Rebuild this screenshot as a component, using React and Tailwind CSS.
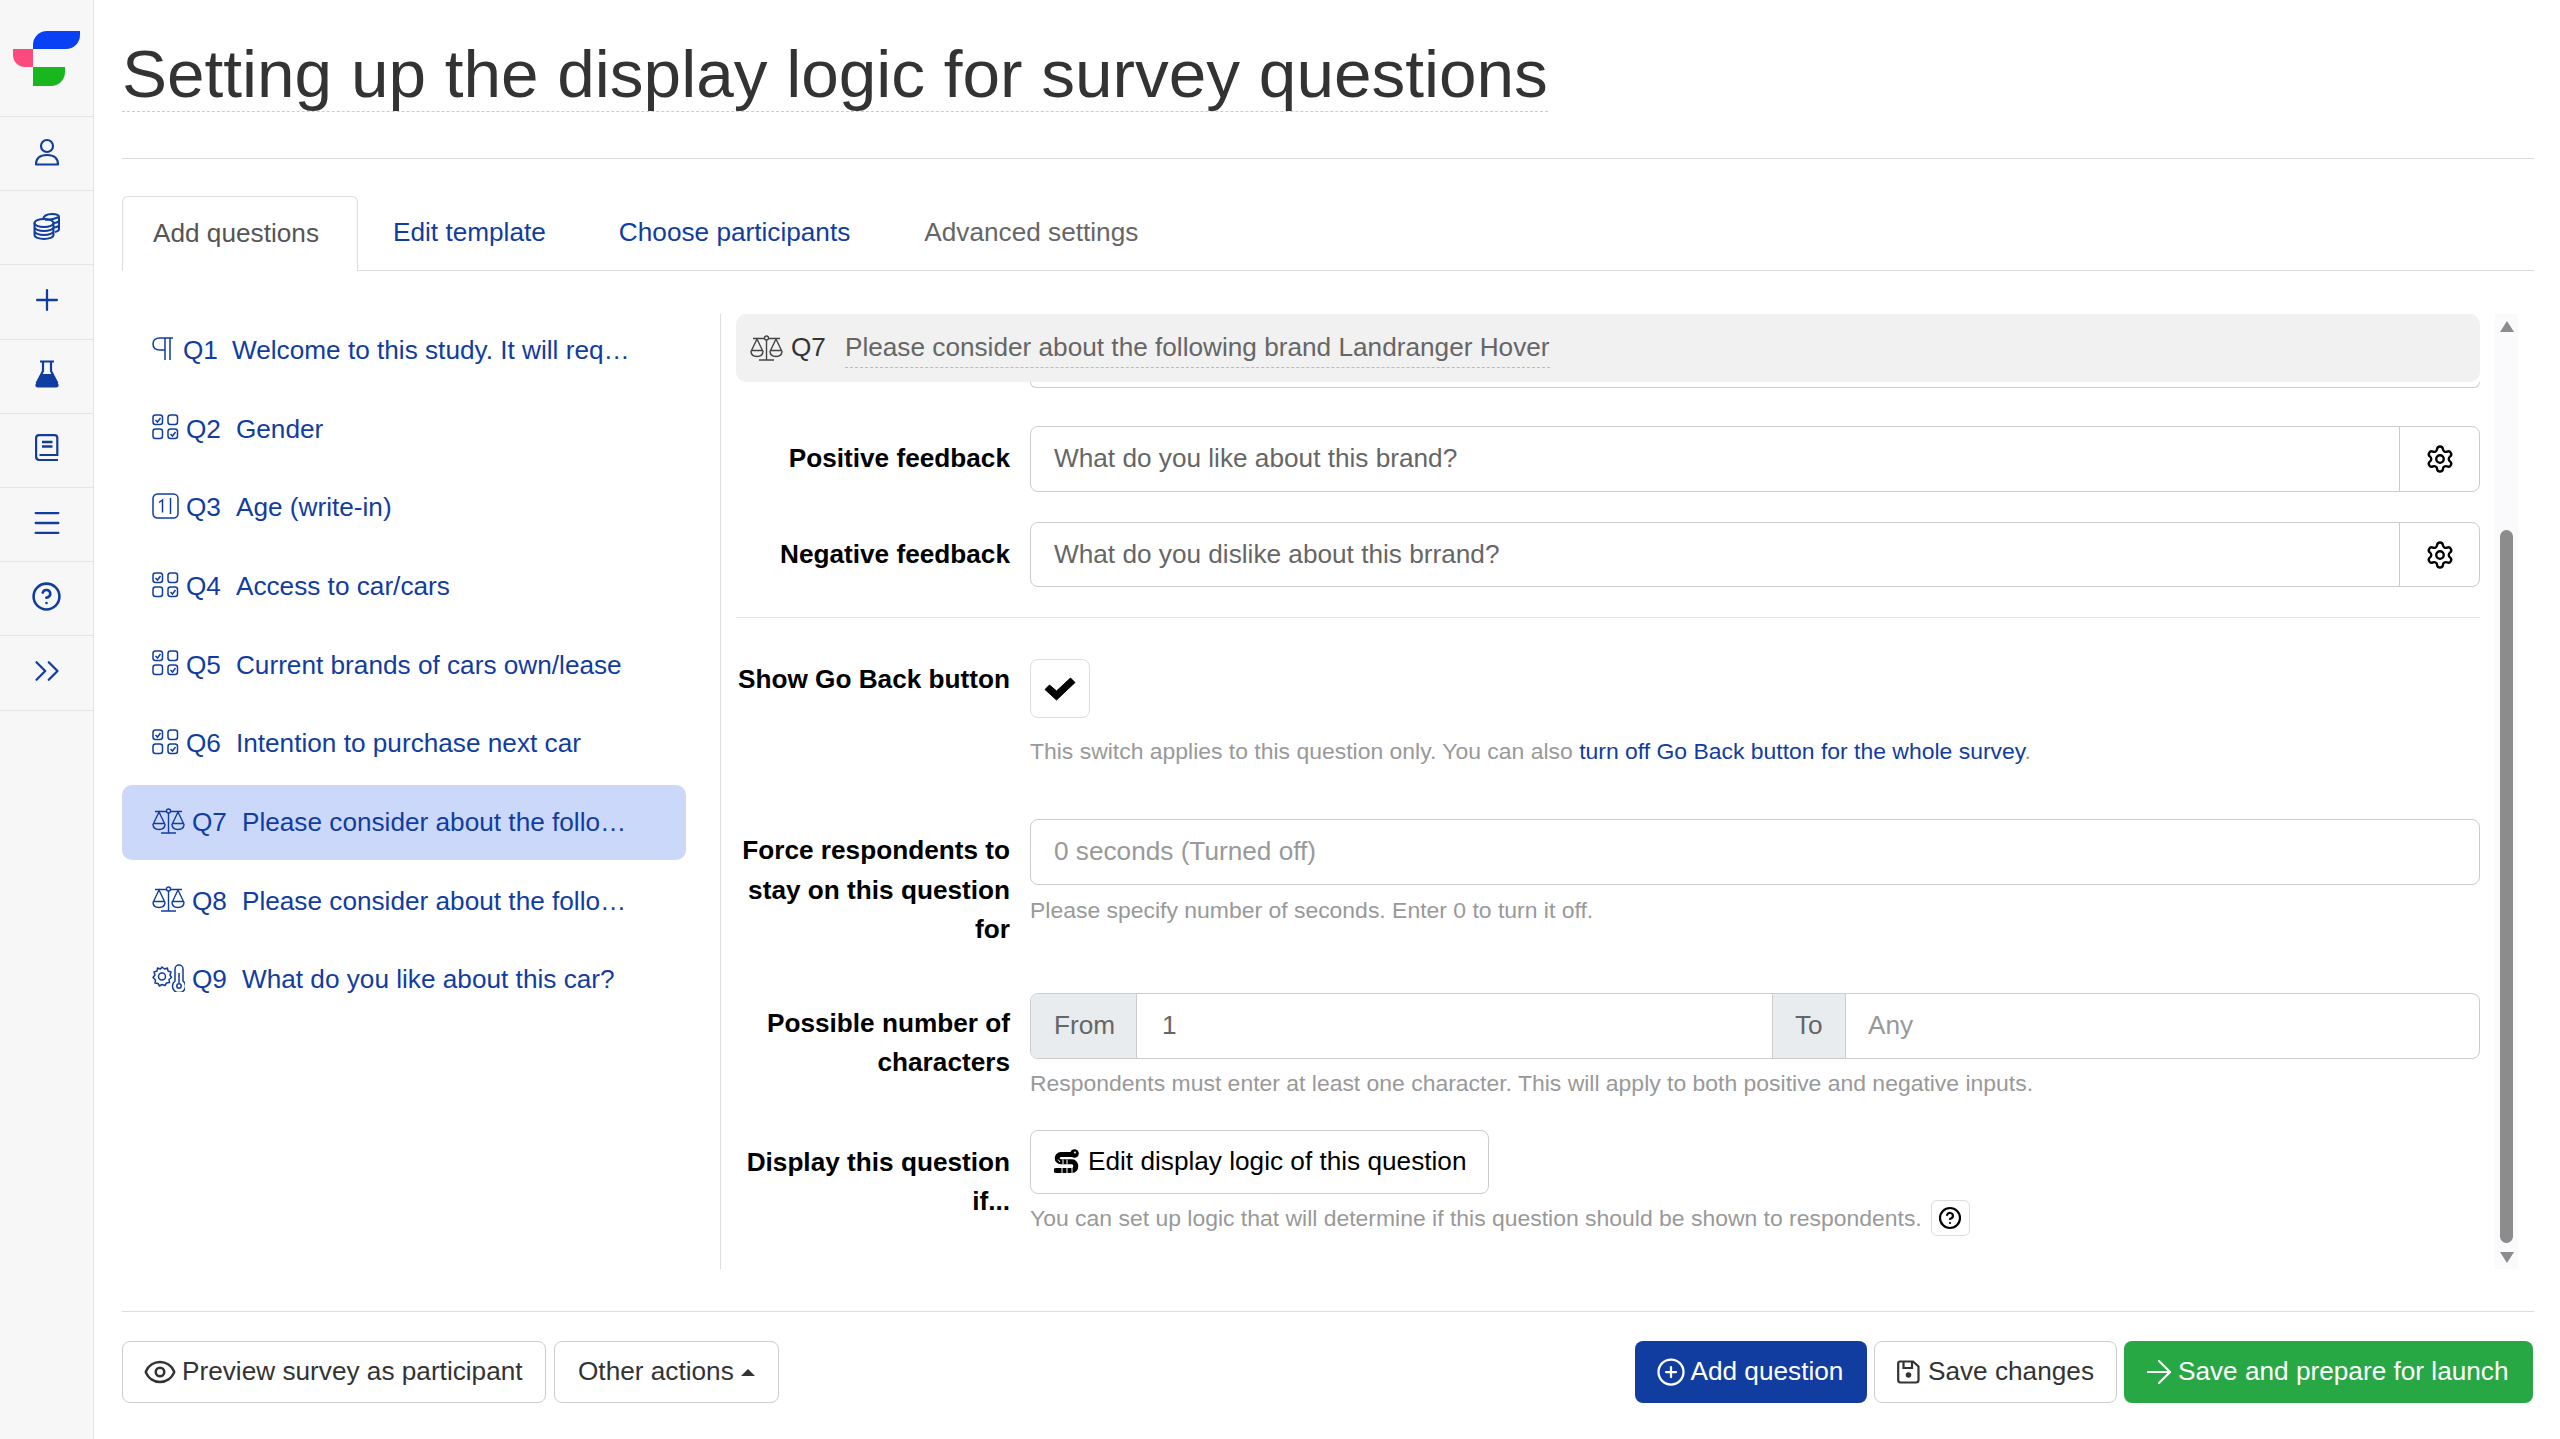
import { Settings, Eye, Plus, Menu, ChevronsRight, ArrowRight, CirclePlus, CircleHelp } from 'lucide-react';

const QUESTIONS = [
  { id: 'Q1', type: 'text', title: 'Welcome to this study. It will req…' },
  { id: 'Q2', type: 'choice', title: 'Gender' },
  { id: 'Q3', type: 'number', title: 'Age (write-in)' },
  { id: 'Q4', type: 'choice', title: 'Access to car/cars' },
  { id: 'Q5', type: 'choice', title: 'Current brands of cars own/lease' },
  { id: 'Q6', type: 'choice', title: 'Intention to purchase next car' },
  { id: 'Q7', type: 'scale', title: 'Please consider about the follo…', active: true },
  { id: 'Q8', type: 'scale', title: 'Please consider about the follo…' },
  { id: 'Q9', type: 'temp', title: 'What do you like about this car?' },
];

function UserIcon() {
  return (
    <svg width="26" height="28" viewBox="0 0 26 28" fill="none" stroke="currentColor" strokeWidth="2.2">
      <circle cx="13" cy="8" r="6" />
      <path d="M2 26.5c0-6 4-9.5 11-9.5s11 3.5 11 9.500z" strokeLinejoin="round" />
    </svg>
  );
}

function CoinsIcon() {
  return (
    <svg width="28" height="28" viewBox="0 0 28 28" fill="none" stroke="currentColor" strokeWidth="2">
      <path d="M10 7.500C10.500 4 14 2 19 2c4 0 7 1 7 3v12c0 1.500-1.500 2.500-4 3" />
      <path d="M12 7.500c3 .5 7 .500 14-2.500M21 11c2 0 4-1 5-2M21 15.500c2 0 4-1 5-2" />
      <ellipse cx="11" cy="11" rx="9.500" ry="4" />
      <path d="M1.500 11v12c0 2.500 4.500 4 9.500 4s9.500-1.500 9.500-4V11M1.500 15c0 2.200 4.500 4 9.500 4s9.500-1.800 9.500-4M1.500 19c0 2.200 4.500 4 9.500 4s9.500-1.800 9.500-4" />
    </svg>
  );
}

function FlaskIcon() {
  return (
    <svg width="24" height="28" viewBox="0 0 24 28" fill="none" stroke="currentColor" strokeWidth="2.200">
      <path d="M5 1.500h14M8 2v9L1.500 23.500M16 2v9l6.500 12.500" />
      <path d="M6.500 14h11l6 10.500c.5 1.800-.5 3-2.500 3H3c-2 0-3-1.200-2.500-3z" fill="currentColor" stroke="none" />
    </svg>
  );
}

function BookIcon() {
  return (
    <svg width="24" height="28" viewBox="0 0 24 28" fill="none" stroke="currentColor" strokeWidth="2.200">
      <path d="M23 26H4.500C2.500 26 1.100 24.500 1.100 22.500V4c0-1.700 1-2.900 3-2.900h15.500c1.700 0 2.700 1 2.700 2.700V21H4.500" />
      <path d="M7 8h10.500M7 12.500h10.500" strokeWidth="2.600" />
    </svg>
  );
}

function PilcrowIcon() {
  return (
    <svg width="22" height="23" viewBox="0 0 22 23" fill="none" stroke="currentColor" strokeWidth="1.500">
      <path d="M21 1H8C3.500 1 1 3.500 1 7s2.500 6 7 6h5M13 1v22M18 1v22" />
    </svg>
  );
}

function ChoiceIcon() {
  const Box = ({ x, y, check }) => (
    <g>
      <rect x={x} y={y} width="9.500" height="9.500" rx="2.500" />
      {check && <path d={`M${x + 2.500} ${y + 5}l2 2 3-4`} />}
    </g>
  );
  return (
    <svg width="27" height="26" viewBox="0 0 27 26" fill="none" stroke="currentColor" strokeWidth="1.500">
      <Box x={1} y={1} check />
      <Box x={16} y={1} />
      <Box x={1} y={15} />
      <Box x={16} y={15} check />
    </svg>
  );
}

function NumberIcon() {
  return (
    <svg width="27" height="26" viewBox="0 0 27 26" fill="none" stroke="currentColor" strokeWidth="1.500">
      <rect x="1" y="1" width="25" height="24" rx="4.500" />
      <path d="M7 9.500 10.500 7v12.500M18.500 5v16" />
    </svg>
  );
}

function ScaleIcon() {
  return (
    <svg width="33" height="26" viewBox="0 0 33 26" fill="none" stroke="currentColor" strokeWidth="1.400">
      <circle cx="16.500" cy="3" r="2" />
      <path d="M3 3.500h11.500M18.500 3.500H30M16.500 5v20M9 25h15" />
      <path d="M7 4 1.500 15.500h11zM26 4l-5.500 11.500h11z" />
      <path d="M1 16c0 3.500 2.500 5.500 6 5.500s6-2 6-5.500M20 16c0 3.500 2.500 5.500 6 5.500s6-2 6-5.500" />
    </svg>
  );
}

function TempIcon() {
  return (
    <svg width="33" height="28" viewBox="0 0 33 28" fill="none" stroke="currentColor" strokeWidth="1.500">
      <path d="M10 3l2.500 2 3-1 .5 3 3 1-1 3 1.500 2.500-2.500 2 .5 3-3 .5-1.500 2.500-3-1-2.500 1.500-1.500-2.500-3-.5.5-3L1 13.500 3 11 2 8l3-1 .5-3 3 1z" strokeLinejoin="round" />
      <circle cx="10" cy="12.500" r="3.500" />
      <path d="M23 17V5a4 4 0 0 1 8 0v12a6.500 6.500 0 1 1-8 0z" />
      <circle cx="27" cy="22" r="2.200" />
      <path d="M27 9v10" />
    </svg>
  );
}

function SnakeIcon() {
  return (
    <svg width="25" height="25" viewBox="0 0 25 25" fill="none">
      <path d="M19 5.500H7C2 5.500 2 12.800 7 12.800h11c5 0 5 8.700 0 8.700H2" stroke="black" strokeWidth="5" strokeLinecap="round" />
      <circle cx="20.500" cy="4.500" r="4.300" fill="black" />
      <circle cx="21" cy="3.500" r="1" fill="white" />
      <path d="M4 10.500l2 2.500M9 10.500v5M13 10.500v5M18 19v5M13 19v5M8 19v5" stroke="white" strokeWidth="1" />
    </svg>
  );
}

function SaveIcon() {
  return (
    <svg width="23" height="24" viewBox="0 0 23 24" fill="none" stroke="currentColor" strokeWidth="2.200">
      <path d="M3 1.500h13L21.500 6.500V20a2.500 2.500 0 0 1-2.500 2.500H3.500A2.500 2.500 0 0 1 1.200 20V3.500A2 2 0 0 1 3 1.500z" />
      <path d="M6.500 2v6h8.500V2" />
      <circle cx="11.500" cy="15" r="2.800" fill="currentColor" stroke="none" />
    </svg>
  );
}

function CheckMark() {
  return (
    <svg width="32" height="24" viewBox="0 0 32 24" fill="black">
      <path d="M1 12.500 5.500 8l7 6L26.500 1 31 5.500 12.500 23z" stroke="black" strokeWidth="1" strokeLinejoin="round" />
    </svg>
  );
}

function TypeIcon({ type }) {
  if (type === 'text') return <PilcrowIcon />;
  if (type === 'choice') return <ChoiceIcon />;
  if (type === 'number') return <NumberIcon />;
  if (type === 'scale') return <ScaleIcon />;
  return <TempIcon />;
}

function NavItem({ children }) {
  return (
    <div className="h-[74.200px] flex items-center justify-center pb-[4px] border-b border-[#e4e4e4] text-[#113da1]">
      {children}
    </div>
  );
}

function Sidebar() {
  return (
    <aside className="w-[94px] shrink-0 bg-[#f7f7f7] border-r border-[#e4e4e4] min-h-[1439px]">
      <div className="h-[117px] border-b border-[#e4e4e4] pt-[31px] pl-[13px]">
        <div className="flex flex-col items-start">
          <div className="ml-[20px] w-[47px] h-[18px] bg-[#0a40f5] rounded-tl-[14px] rounded-br-[14px]" />
          <div className="w-[20px] h-[18px] bg-[#fb4a7d] rounded-bl-[12px]" />
          <div className="ml-[20px] w-[32px] h-[19px] bg-[#19b61f] rounded-br-[14px]" />
        </div>
      </div>
      <NavItem><UserIcon /></NavItem>
      <NavItem><CoinsIcon /></NavItem>
      <NavItem><Plus size={34} strokeWidth={1.600} /></NavItem>
      <NavItem><FlaskIcon /></NavItem>
      <NavItem><BookIcon /></NavItem>
      <NavItem><Menu size={34} strokeWidth={1.600} /></NavItem>
      <NavItem><CircleHelp size={31} strokeWidth={2} /></NavItem>
      <NavItem><ChevronsRight size={42} strokeWidth={1.300} /></NavItem>
    </aside>
  );
}

function Tabs() {
  return (
    <div className="flex h-[112px] pt-[37px] text-[26.200px] leading-[38px] border-b border-[#dddddd] items-stretch">
      <div className="w-[236px] h-[75px] -mb-px pl-[30px] pt-[17px] bg-white border border-b-0 border-[#dddddd] rounded-t-[6px] text-[#555555]">
        Add questions
      </div>
      <div className="ml-[35px] pt-[17px] text-[#113da1]">Edit template</div>
      <div className="ml-[73px] pt-[17px] text-[#113da1]">Choose participants</div>
      <div className="ml-[74px] pt-[17px] text-[#666666]">Advanced settings</div>
    </div>
  );
}

function QuestionList() {
  return (
    <div className="w-[564px] shrink-0 flex flex-col gap-[3.700px] -mt-px text-[26.200px] text-[#113da1]">
      {QUESTIONS.map((q) => (
        <div key={q.id} className={`h-[75px] flex items-center pl-[30px] whitespace-nowrap rounded-[10px] ${q.active ? 'bg-[#ccd8fa]' : ''}`}>
          <span className="shrink-0 flex items-center mr-[7px] -mt-[4px]"><TypeIcon type={q.type} /></span>
          <span className={`shrink-0 ${q.type === 'text' ? 'ml-[2px] mr-[14px]' : 'mr-[15px]'}`}>{q.id}</span>
          <span>{q.title}</span>
        </div>
      ))}
    </div>
  );
}

function Label({ children, className = '' }) {
  return <div className={`w-[274px] shrink-0 text-right font-bold text-black text-[26.200px] leading-[39.500px] ${className}`}>{children}</div>;
}

function Help({ children, className = '' }) {
  return <div className={`text-[22.950px] leading-[34px] text-[#999999] whitespace-nowrap ${className}`}>{children}</div>;
}

function GearInput({ value, height }) {
  return (
    <div className={`flex-1 flex border border-[#cccccc] rounded-[8px] ${height}`}>
      <div className="flex-1 flex items-center px-[23px] text-[#666666] border-r border-[#cccccc]">{value}</div>
      <div className="w-[79px] flex items-center justify-center text-black"><Settings size={30} strokeWidth={1.900} /></div>
    </div>
  );
}

function QuestionPane() {
  return (
    <div className="flex-1 min-w-0 pl-[15px] text-[26.200px]">
      <div className="h-[68px] bg-[#f1f1f1] rounded-[10px] flex items-center pl-[14px] text-[#444444]">
        <ScaleIcon />
        <span className="ml-[8px] text-[#333333]">Q7</span>
        <span className="ml-[19px] text-[#666666] border-b border-dashed border-[#bbbbbb]">Please consider about the following brand Landranger Hover</span>
      </div>
      <div className="ml-[294px] h-[6px] border-b border-x border-[#cccccc] rounded-b-[8px]" />

      <div className="flex items-center mt-[38px] gap-[20px]">
        <Label>Positive feedback</Label>
        <GearInput value="What do you like about this brand?" height="h-[66px]" />
      </div>
      <div className="flex items-center mt-[30px] gap-[20px]">
        <Label>Negative feedback</Label>
        <GearInput value="What do you dislike about this brrand?" height="h-[65px]" />
      </div>
      <div className="h-px bg-[#e4e4e4] mt-[30px]" />

      <div className="flex gap-[20px] mt-[41px]">
        <Label className="pt-[1px]">Show Go Back button</Label>
        <div>
          <div className="w-[60px] h-[59px] border border-[#dddddd] rounded-[8px] flex items-center justify-center">
            <CheckMark />
          </div>
          <Help className="mt-[16px]">
            This switch applies to this question only. You can also <span className="text-[#113da1]">turn off Go Back button for the whole survey</span>.
          </Help>
        </div>
      </div>

      <div className="flex gap-[20px] mt-[51px]">
        <Label className="pt-[12px]">Force respondents to stay on this question for</Label>
        <div className="flex-1">
          <div className="h-[66px] border border-[#cccccc] rounded-[8px] flex items-center px-[23px] text-[#999999]">0 seconds (Turned off)</div>
          <Help className="mt-[8px]">Please specify number of seconds. Enter 0 to turn it off.</Help>
        </div>
      </div>

      <div className="flex gap-[20px] mt-[43px]">
        <Label className="pt-[11px]">Possible number of characters</Label>
        <div className="flex-1">
          <div className="h-[66px] border border-[#cccccc] rounded-[8px] flex text-[#666666]">
            <div className="w-[106px] bg-[#e9ecef] rounded-l-[7px] flex items-center pl-[23px] border-r border-[#cccccc]">From</div>
            <div className="w-[635px] flex items-center pl-[25px]">1</div>
            <div className="w-[74px] bg-[#e9ecef] flex items-center pl-[22px] border-x border-[#cccccc]">To</div>
            <div className="flex-1 flex items-center pl-[22px] text-[#999999]">Any</div>
          </div>
          <Help className="mt-[7px]">Respondents must enter at least one character. This will apply to both positive and negative inputs.</Help>
        </div>
      </div>

      <div className="flex gap-[20px] mt-[30px]">
        <Label className="pt-[13px]">Display this question if...</Label>
        <div className="flex-1">
          <div className="w-[459px] h-[64px] border border-[#cccccc] rounded-[8px] flex items-center pl-[23px] text-black">
            <SnakeIcon />
            <span className="ml-[9px]">Edit display logic of this question</span>
          </div>
          <div className="flex items-center mt-[6px]">
            <Help>You can set up logic that will determine if this question should be shown to respondents.</Help>
            <div className="ml-[9px] w-[39px] h-[36px] border border-[#dddddd] rounded-[6px] flex items-center justify-center text-black">
              <CircleHelp size={24} strokeWidth={2.200} />
            </div>
          </div>
        </div>
      </div>
    </div>
  );
}

function ScrollTrack() {
  return (
    <div className="ml-[15px] mr-[16px] w-[23px] h-[955px] shrink-0 bg-[#fafafd] flex flex-col items-center pt-[7px] pb-[4px]">
      <div className="w-0 h-0 border-x-[7px] border-x-transparent border-b-[11px] border-b-[#8c8c8c]" />
      <div className="w-[13px] h-[713px] mt-[198px] bg-[#8c8c8c] rounded-full" />
      <div className="w-0 h-0 mt-[9px] border-x-[7px] border-x-transparent border-t-[11px] border-t-[#8c8c8c]" />
    </div>
  );
}

function Footer() {
  return (
    <div className="mt-[42px] border-t border-[#dddddd] pt-[29px] flex justify-between text-[26.200px]">
      <div className="flex gap-[8px] text-[#333333]">
        <div className="w-[424px] h-[62px] border border-[#cccccc] rounded-[8px] flex items-center pl-[20px]">
          <Eye size={34} strokeWidth={1.800} />
          <span className="ml-[5px]">Preview survey as participant</span>
        </div>
        <div className="w-[225px] h-[62px] border border-[#cccccc] rounded-[8px] flex items-center pl-[23px]">
          Other actions
          <span className="ml-[7px] w-0 h-0 border-x-[7px] border-x-transparent border-b-[7px] border-b-[#333333]" />
        </div>
      </div>
      <div className="flex gap-[7.500px] mr-[1.500px]">
        <div className="w-[232px] h-[62px] bg-[#113da1] text-white rounded-[8px] flex items-center pl-[21px]">
          <CirclePlus size={30} strokeWidth={1.800} />
          <span className="ml-[5px]">Add question</span>
        </div>
        <div className="w-[242.500px] h-[62px] border border-[#cccccc] text-[#333333] rounded-[8px] flex items-center pl-[22px]">
          <SaveIcon />
          <span className="ml-[8px]">Save changes</span>
        </div>
        <div className="w-[408.500px] h-[62px] bg-[#28a745] text-white rounded-[8px] flex items-center pl-[16px]">
          <ArrowRight size={38} strokeWidth={1.300} />
          <span>Save and prepare for launch</span>
        </div>
      </div>
    </div>
  );
}

export default function App() {
  return (
    <div className="flex bg-white min-h-[1439px] font-['Liberation_Sans',Arial,sans-serif]">
      <Sidebar />
      <main className="flex-1 min-w-0 pl-[28px] pr-[26px]">
        <div className="h-[159px] border-b border-[#dddddd] pt-[36px]">
          <h1 className="inline-block text-[67.500px] leading-[75px] text-[#333333] border-b border-dashed border-[#cccccc]">
            Setting up the display logic for survey questions
          </h1>
        </div>
        <Tabs />
        <div className="flex mt-[43px] items-start">
          <QuestionList />
          <div className="ml-[34px] w-px h-[955px] bg-[#dddddd] shrink-0" />
          <QuestionPane />
          <ScrollTrack />
        </div>
        <Footer />
      </main>
    </div>
  );
}
